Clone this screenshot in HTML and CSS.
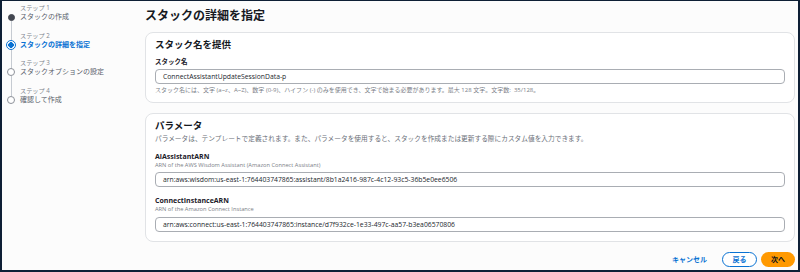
FILE: index.html
```html
<!DOCTYPE html>
<html lang="ja">
<head>
<meta charset="utf-8">
<title>スタックの詳細を指定</title>
<link rel="stylesheet" href="styles.css">
</head>
<body>
<div class="frame">
  <nav class="sidebar">
    <div class="step first done">
      <div class="rail"><span class="seg"></span><span class="dot"></span><span class="seg grow"></span></div>
      <div class="step-text"><div class="step-label">ステップ 1</div><div class="step-title">スタックの作成</div></div>
    </div>
    <div class="step active">
      <div class="rail"><span class="seg"></span><span class="dot"></span><span class="seg grow"></span></div>
      <div class="step-text"><div class="step-label">ステップ 2</div><div class="step-title">スタックの詳細を指定</div></div>
    </div>
    <div class="step">
      <div class="rail"><span class="seg"></span><span class="dot"></span><span class="seg grow"></span></div>
      <div class="step-text"><div class="step-label">ステップ 3</div><div class="step-title">スタックオプションの設定</div></div>
    </div>
    <div class="step last">
      <div class="rail"><span class="seg"></span><span class="dot"></span><span class="seg grow"></span></div>
      <div class="step-text"><div class="step-label">ステップ 4</div><div class="step-title">確認して作成</div></div>
    </div>
  </nav>
  <main class="main">
    <h1 class="page-title">スタックの詳細を指定</h1>
    <section class="card card-name">
      <h2 class="card-title">スタック名を提供</h2>
      <div class="field-label">スタック名</div>
      <div class="input">ConnectAssistantUpdateSessionData-p</div>
      <div class="hint">スタック名には、文字 (a~z、A~Z)、数字 (0-9)、ハイフン (-) のみを使用でき、文字で始まる必要があります。最大 128 文字。文字数:&nbsp; 35/128。</div>
    </section>
    <section class="card card-params">
      <h2 class="card-title">パラメータ</h2>
      <div class="card-desc">パラメータは、テンプレートで定義されます。また、パラメータを使用すると、スタックを作成または更新する際にカスタム値を入力できます。</div>
      <div class="field-label param-label">AiAssistantARN</div>
      <div class="field-sub">ARN of the AWS Wisdom Assistant (Amazon Connect Assistant)</div>
      <div class="input">arn:aws:wisdom:us-east-1:764403747865:assistant/8b1a2416-987c-4c12-93c5-36b5e0ee6506</div>
      <div class="field-label param-label">ConnectInstanceARN</div>
      <div class="field-sub">ARN of the Amazon Connect Instance</div>
      <div class="input input-last">arn:aws:connect:us-east-1:764403747865:instance/d7f932ce-1e33-497c-aa57-b3ea06570806</div>
    </section>
    <div class="actions">
      <button class="btn btn-link">キャンセル</button>
      <button class="btn btn-normal">戻る</button>
      <button class="btn btn-primary">次へ</button>
    </div>
  </main>
</div>
</body>
</html>
```
FILE: styles.css
```css
* { box-sizing: border-box; }
html, body { margin: 0; padding: 0; }
body {
  font-family: "Open Sans", "Noto Sans CJK JP", sans-serif;
  color: #16191f;
  background: #ffffff;
}
.frame {
  width: 800px;
  height: 272px;
  display: flex;
  border-style: solid;
  border-color: #0e1f35;
  border-width: 1px 2px 2px 2px;
  background: #fcfcfc;
  overflow: hidden;
}
.sidebar {
  width: 143px;
  flex: none;
  padding: 2px 0 0 3px;
  display: flex;
  flex-direction: column;
}
.step {
  display: grid;
  grid-template-columns: 12px 1fr;
  column-gap: 3px;
  height: 27.5px;
}
.rail {
  display: flex;
  flex-direction: column;
  align-items: center;
}
.seg { width: 1px; background: #c6cbd2; height: 10.5px; flex: none; }
.seg.grow { flex: 1; }
.first .seg:first-child { background: transparent; }
.last .seg.grow { background: transparent; }
.dot {
  width: 8px; height: 8px; flex: none;
  border-radius: 50%;
  border: 1px solid #8d9199;
  background: #fff;
  margin: -0.5px 0;
}
.done .dot { background: #424650; border-color: #424650; width: 7px; height: 7px; margin: 0; }
.active .seg:first-child { height: 9px; }
.active .dot {
  width: 10px; height: 10px; margin: 0;
  border: 1.5px solid #0972d3;
  background: radial-gradient(circle, #0972d3 0 2.6px, #fff 3px);
}
.step-label {
  font-size: 6.2px;
  line-height: 9px;
  color: #80858d;
  height: 9px;
}
.step-title {
  font-size: 7px;
  line-height: 10px;
  color: #5a616b;
  white-space: nowrap;
}
.active .step-title { color: #0972d3; font-weight: 700; }

.main {
  flex: 1;
  padding: 6px 3px 0 0;
  display: flex;
  flex-direction: column;
}
.page-title {
  margin: 0 0 7px 0;
  font-size: 12px;
  line-height: 18px;
  font-weight: 700;
  color: #16191f;
}
.card {
  background: #ffffff;
  border: 1px solid #e1e3e6;
  border-radius: 8px;
  padding: 6px 9px 8px 9px;
}
.card-params { margin-top: 10px; padding-bottom: 9px; }
.card-title {
  margin: 0;
  font-size: 9.5px;
  line-height: 12px;
  font-weight: 700;
  color: #16191f;
}
.field-label {
  margin-top: 7px;
  font-size: 6.5px;
  line-height: 8px;
  font-weight: 700;
  color: #1b2029;
}
.param-label { margin-top: 10px; font-size: 7px; }
.field-sub {
  font-size: 5.7px;
  line-height: 8px;
  color: #7b8088;
  white-space: nowrap;
}
.input {
  margin-top: 3px;
  height: 15px;
  border: 1px solid #a9adb3;
  border-radius: 4px;
  padding: 0 7px;
  font-size: 6.8px;
  line-height: 13px;
  color: #22272e;
  background: #fff;
  white-space: nowrap;
}
.input-last { margin-top: 4px; }
.hint {
  margin-top: 2px;
  font-size: 6px;
  line-height: 8px;
  color: #7b8088;
  white-space: nowrap;
}
.card-desc {
  margin-top: 3px;
  font-size: 6.7px;
  line-height: 8px;
  color: #6b7079;
  white-space: nowrap;
}
.actions {
  margin-top: 10px;
  display: flex;
  justify-content: flex-end;
  gap: 4px;
}
.btn {
  font-family: inherit;
  height: 15px;
  border-radius: 8px;
  font-size: 7px;
  font-weight: 700;
  line-height: 11px;
  padding: 0;
  cursor: pointer;
}
.btn-link {
  border: none;
  background: transparent;
  color: #0972d3;
  padding: 0 11px;
}
.btn-normal {
  width: 35px;
  border: 1.5px solid #0972d3;
  background: #fff;
  color: #0972d3;
}
.btn-primary {
  width: 34px;
  border: none;
  background: #ff9900;
  color: #0f141a;
}
```
